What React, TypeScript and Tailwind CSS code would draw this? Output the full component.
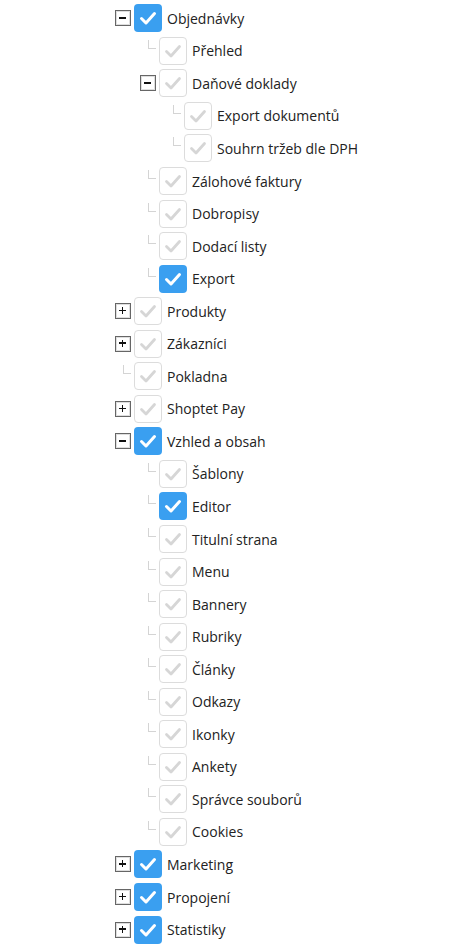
import React from "react";

interface Node {
  label: string;
  checked?: boolean;
  open?: boolean;
  children?: Node[];
  collapsed?: boolean; // has children but closed
}

const tree: Node[] = [
  {
    label: "Objednávky",
    checked: true,
    open: true,
    children: [
      { label: "Přehled" },
      {
        label: "Daňové doklady",
        open: true,
        children: [{ label: "Export dokumentů" }, { label: "Souhrn tržeb dle DPH" }],
      },
      { label: "Zálohové faktury" },
      { label: "Dobropisy" },
      { label: "Dodací listy" },
      { label: "Export", checked: true },
    ],
  },
  { label: "Produkty", collapsed: true },
  { label: "Zákazníci", collapsed: true },
  { label: "Pokladna" },
  { label: "Shoptet Pay", collapsed: true },
  {
    label: "Vzhled a obsah",
    checked: true,
    open: true,
    children: [
      { label: "Šablony" },
      { label: "Editor", checked: true },
      { label: "Titulní strana" },
      { label: "Menu" },
      { label: "Bannery" },
      { label: "Rubriky" },
      { label: "Články" },
      { label: "Odkazy" },
      { label: "Ikonky" },
      { label: "Ankety" },
      { label: "Správce souborů" },
      { label: "Cookies" },
    ],
  },
  { label: "Marketing", checked: true, collapsed: true },
  { label: "Propojení", checked: true, collapsed: true },
  { label: "Statistiky", checked: true, collapsed: true },
];

const Expander = ({ open }: { open: boolean }) => (
  <div className="relative w-[16px] h-[16px] border-[1.5px] border-[#666] bg-white shadow-[inset_0_0_0_1px_#dedede]">
    <div className="absolute left-[3px] top-[5.75px] w-[7px] h-[1.5px] bg-[#111]" />
    {!open && <div className="absolute left-[5.75px] top-[3px] w-[1.5px] h-[7px] bg-[#111]" />}
  </div>
);

const Connector = () => (
  <div className="w-[16px] h-[28px] flex">
    <div className="ml-[8px] mt-[3px] w-[9px] h-[9px] border-l border-b border-[#d4d4d4]" />
  </div>
);

const Checkbox = ({ checked }: { checked?: boolean }) =>
  checked ? (
    <div className="w-[28px] h-[28px] rounded-[4px] bg-[#3a9ff0] flex items-center justify-center">
      <svg width="20" height="20" viewBox="0 0 20 20">
        <polyline points="3.5,10.5 8,15 16.5,5.5" fill="none" stroke="#fff" strokeWidth="3" strokeLinecap="round" strokeLinejoin="round" />
      </svg>
    </div>
  ) : (
    <div className="w-[28px] h-[28px] rounded-[4px] border border-[#dcdcdc] bg-white flex items-center justify-center">
      <svg width="20" height="20" viewBox="0 0 20 20">
        <polyline points="3.5,10.5 8,15 16.5,5.5" fill="none" stroke="#d6d6d6" strokeWidth="2.8" strokeLinecap="round" strokeLinejoin="round" />
      </svg>
    </div>
  );

const Row = ({ node, level }: { node: Node; level: number }) => {
  const hasKids = node.open || node.collapsed;
  return (
    <>
      <div className="h-[32.55px] flex items-center" style={{ paddingLeft: level * 25 }}>
        <div className="w-[16px] flex items-center">
          {hasKids ? <Expander open={!!node.open} /> : <Connector />}
        </div>
        <div className="ml-[3px]">
          <Checkbox checked={node.checked} />
        </div>
        <span className="ml-[5px] mt-[1px] text-[14px] text-[#222] leading-none">{node.label}</span>
      </div>
      {node.open && node.children?.map((c) => <Row key={c.label} node={c} level={level + 1} />)}
    </>
  );
};

export default function App() {
  return (
    <div className="w-[468px] h-[945px] bg-white pl-[115px] pt-[2px] overflow-hidden" style={{ fontFamily: '"Open Sans", sans-serif' }}>
      {tree.map((n) => (
        <Row key={n.label} node={n} level={0} />
      ))}
    </div>
  );
}
